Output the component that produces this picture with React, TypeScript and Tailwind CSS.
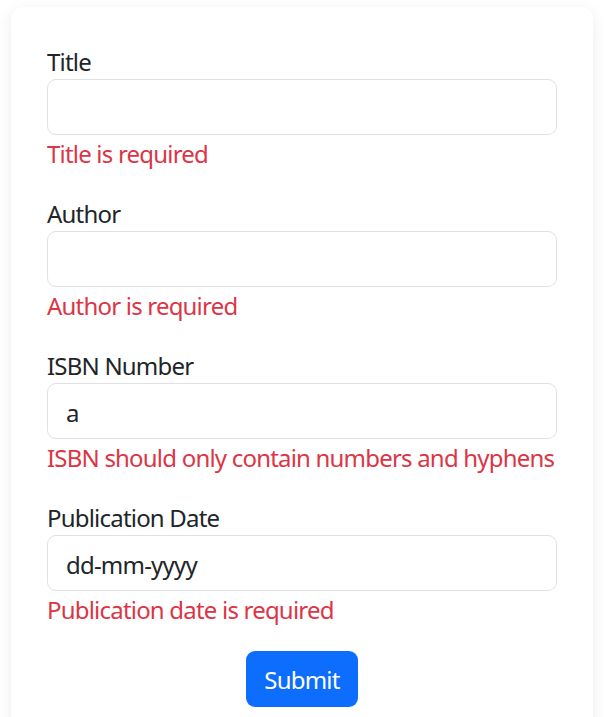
import { useState } from "react";

const fields = [
  { label: "Title", value: "", error: "Title is required" },
  { label: "Author", value: "", error: "Author is required" },
  { label: "ISBN Number", value: "a", error: "ISBN should only contain numbers and hyphens" },
  { label: "Publication Date", value: "dd-mm-yyyy", error: "Publication date is required" },
];

export default function App() {
  const [values, setValues] = useState(fields.map((f) => f.value));

  return (
    <div className="min-h-screen bg-white px-[11px] pt-[7px] font-['Noto_Sans','Open_Sans',sans-serif] text-[24px] leading-[36px] tracking-[-0.8px] text-[#212529]">
      <div className="rounded-[12px] bg-white p-[36px] shadow-[0_4px_16px_rgba(0,0,0,0.08)]">
        <form onSubmit={(e) => e.preventDefault()}>
          {fields.map((f, i) => (
            <div key={f.label} className="mb-[24px]">
              <label className="block pt-[2px] pb-0 leading-[34px]">{f.label}</label>
              <input
                className="block h-[56px] w-full rounded-[9px] border border-[#dee2e6] bg-white px-[18px] pt-[10px] pb-[8px] tracking-[-0.8px] text-[#212529] outline-none"
                value={values[i]}
                onChange={(e) => {
                  const next = [...values];
                  next[i] = e.target.value;
                  setValues(next);
                }}
              />
              <div className="whitespace-nowrap pt-[2px] leading-[34px] text-[#dc3545]">{f.error}</div>
            </div>
          ))}
          <div className="flex justify-center">
            <button
              type="submit"
              className="h-[56px] rounded-[9px] bg-[#0d6efd] px-[18px] pt-[2px] tracking-[-0.8px] text-white"
            >
              Submit
            </button>
          </div>
        </form>
      </div>
    </div>
  );
}
